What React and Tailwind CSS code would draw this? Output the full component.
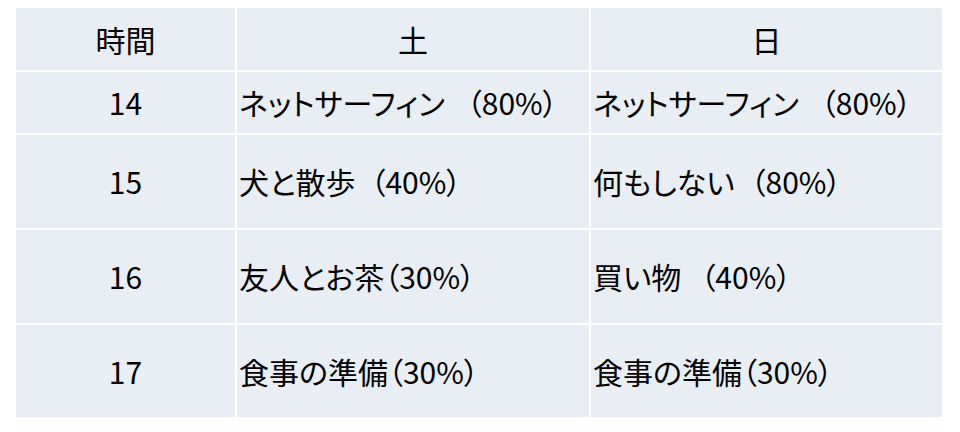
const rows = [
  { h: "h-[61px]", time: "14", sat: ["ネットサーフィン", "（80%）", "ml-[22px]"], sun: ["ネットサーフィン", "（80%）", "ml-[22px]"] },
  { h: "h-[93px]", time: "15", sat: ["犬と散歩", "（40%）", "ml-[15px]"], sun: ["何もしない", "（80%）", "ml-[16px]"] },
  { h: "h-[93px]", time: "16", sat: ["友人とお茶", "（30%）", "ml-0"], sun: ["買い物", "（40%）", "ml-[19px]"] },
  { h: "h-[92px]", time: "17", sat: ["食事の準備", "（30%）", "ml-0"], sun: ["食事の準備", "（30%）", "ml-0"] },
];

function Cell({ h, text }) {
  const [main, pct, gap] = text;
  return (
    <div className={`${h} bg-[#e9edf4] flex items-center pl-[2px] whitespace-nowrap`}>
      <span>{main}</span>
      <span className={gap}>{pct}</span>
    </div>
  );
}

export default function App() {
  return (
    <div className="w-[960px] h-[432px] bg-white pt-[8px] pl-[16px] font-['Noto_Sans_CJK_JP',sans-serif] text-[30px] text-black [font-feature-settings:'palt']">
      <div className="grid grid-cols-[219px_352px_351px] gap-[2px] w-fit">
        <div className="h-[62px] bg-[#e9edf4] flex items-center justify-center">時間</div>
        <div className="h-[62px] bg-[#e9edf4] flex items-center justify-center">土</div>
        <div className="h-[62px] bg-[#e9edf4] flex items-center justify-center">日</div>
        {rows.map((r) => (
          <div key={r.time} className="contents">
            <div className={`${r.h} bg-[#e9edf4] flex items-center justify-center`}>{r.time}</div>
            <Cell h={r.h} text={r.sat} />
            <Cell h={r.h} text={r.sun} />
          </div>
        ))}
      </div>
    </div>
  );
}
